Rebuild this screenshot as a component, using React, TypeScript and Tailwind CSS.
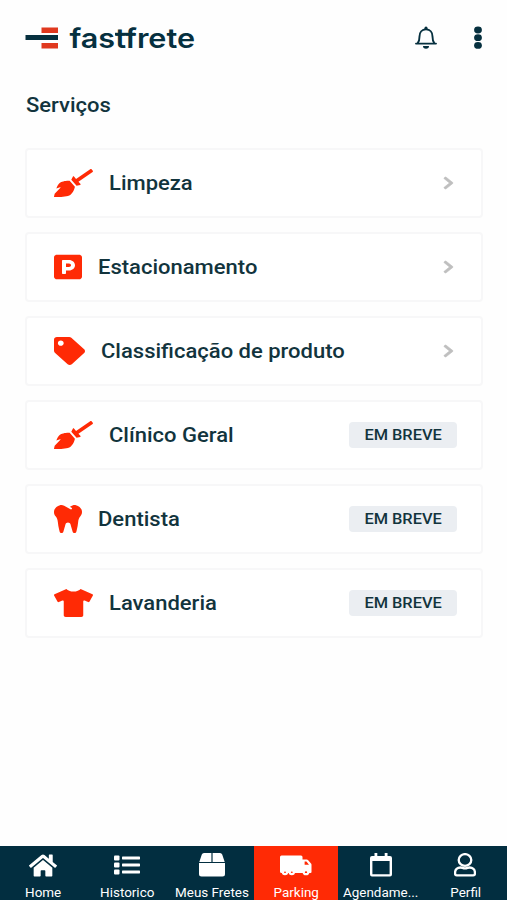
import type { ReactNode } from "react";
import type { IconType } from "react-icons";
import {
  FaBroom,
  FaChevronRight,
  FaHome,
  FaParking,
  FaTag,
  FaTooth,
  FaTshirt,
} from "react-icons/fa";

type Service = {
  label: string;
  icon: IconType;
  iconClass: string;
  soon?: boolean;
};

const services: Service[] = [
  { label: "Limpeza", icon: FaBroom, iconClass: "w-[39px]" },
  { label: "Estacionamento", icon: FaParking, iconClass: "w-7" },
  { label: "Classificação de produto", icon: FaTag, iconClass: "w-[31px]" },
  { label: "Clínico Geral", icon: FaBroom, iconClass: "w-[39px]", soon: true },
  { label: "Dentista", icon: FaTooth, iconClass: "w-7", soon: true },
  { label: "Lavanderia", icon: FaTshirt, iconClass: "w-[39px]", soon: true },
];

const Logo = () => (
  <svg width="180" height="44" viewBox="0 -7 180 44" role="img" aria-label="fastfrete">
    <rect x="16.5" y="4.5" width="16.5" height="5.5" fill="#e0391f" />
    <rect x="0.5" y="12" width="32.5" height="5" fill="#06303f" />
    <rect x="16.5" y="20" width="16.5" height="5.5" fill="#e0391f" />
    <text
      x="44.5"
      y="24.5"
      textLength="125.5"
      lengthAdjust="spacingAndGlyphs"
      fill="#06303f"
      className="font-['Inter',sans-serif] text-[27px] font-semibold"
    >
      fastfrete
    </text>
    {/* shared crossbar of the t and f */}
    <rect x="90" y="9.8" width="20" height="2.7" fill="#06303f" />
  </svg>
);

const BellIcon = () => (
  <svg width="22" height="24" viewBox="0 0 22 24" fill="none" stroke="#06303f" strokeWidth="1.9">
    <path
      d="M1 17.600h20M2.600 17.400c1.700-2 1.900-3.800 1.900-7C4.500 6.200 7 3.400 11 3.400s6.500 2.800 6.500 7c0 3.200.2 5 1.900 7"
      strokeLinejoin="round"
      strokeLinecap="round"
    />
    <circle cx="11" cy="2.200" r="1.600" fill="#06303f" stroke="none" />
    <path d="M8 20h6a3 2.800 0 0 1-6 0z" fill="#06303f" stroke="none" />
  </svg>
);

const DotsIcon = () => (
  <svg width="8" height="24" viewBox="0 0 8 24" fill="#06303f">
    <ellipse cx="4" cy="4" rx="3.900" ry="3.400" />
    <ellipse cx="4" cy="11.700" rx="3.900" ry="3.400" />
    <ellipse cx="4" cy="19.400" rx="3.900" ry="3.400" />
  </svg>
);

const HistoryIcon = () => (
  <svg width="26" height="20" viewBox="0 0 26 20" fill="#fff">
    <rect x="0" y="0.500" width="5.500" height="5" rx="1" />
    <rect x="0" y="7.500" width="5.500" height="5" rx="1" />
    <rect x="0" y="14.500" width="5.500" height="5" rx="1" />
    <rect x="8" y="1.600" width="18" height="2.800" rx="0.600" />
    <rect x="8" y="8.600" width="18" height="2.800" rx="0.600" />
    <rect x="8" y="15.600" width="18" height="2.800" rx="0.600" />
  </svg>
);

const BoxIcon = () => (
  <svg width="26" height="24" viewBox="0 0 26 24" fill="#fff">
    <path d="M12.400 0v9H0.300L2.800 1.600A2.400 2.400 0 0 1 5 0zM13.600 0H21a2.400 2.400 0 0 1 2.200 1.600L25.700 9H13.600z" />
    <path d="M0 10.100h26V21a2.500 2.500 0 0 1-2.500 2.500h-21A2.500 2.500 0 0 1 0 21z" />
  </svg>
);

const TruckIcon = () => (
  <svg width="32" height="21" viewBox="0 0 32 21">
    <path
      d="M1.500 0.500H21A1.500 1.500 0 0 1 22.500 2v2.500h4.200a2 2 0 0 1 1.500.7l2.800 3.200a2 2 0 0 1 .5 1.300V17a1 1 0 0 1-1 1H1.500A1.500 1.500 0 0 1 0 16.500V2A1.500 1.500 0 0 1 1.500.5z"
      fill="#fff"
    />
    <path d="M24.600 6.500h1.800l2.600 3.300h-4.400z" fill="#ff2a05" />
    <g fill="#ff2a05" stroke="#fff" strokeWidth="2.200">
      <ellipse cx="5" cy="17.200" rx="2.100" ry="1.900" />
      <ellipse cx="11.800" cy="17.200" rx="2.100" ry="1.900" />
      <ellipse cx="26" cy="17.200" rx="2.300" ry="2" />
    </g>
  </svg>
);

const CalendarIcon = () => (
  <svg width="22" height="24" viewBox="0 0 22 24">
    <path
      d="M4.500 0h2.800v3h7.400V0h2.800v3H20a2 2 0 0 1 2 2v16.500a2 2 0 0 1-2 2H2a2 2 0 0 1-2-2V5a2 2 0 0 1 2-2h2.500zM2.400 8v13.200h17.200V8z"
      fill="#fff"
      fillRule="evenodd"
    />
  </svg>
);

const UserIcon = () => (
  <svg width="22" height="24" viewBox="0 0 22 24" fill="none" stroke="#fff" strokeWidth="2.300">
    <ellipse cx="11" cy="7" rx="6.300" ry="5.900" />
    <path d="M6.500 14.500c1.700 0 2.300.9 4.500.9s2.800-.9 4.500-.9c3.300 0 5.400 2 5.400 4.800v1.500c0 .9-.7 1.500-1.600 1.500H2.700c-.9 0-1.600-.6-1.600-1.500v-1.500c0-2.800 2.100-4.800 5.400-4.800z" />
  </svg>
);

type Tab = { label: string; icon: ReactNode; active?: boolean };

const tabs: Tab[] = [
  { label: "Home", icon: <FaHome className="h-[25px] w-[28px]" preserveAspectRatio="none" /> },
  { label: "Historico", icon: <HistoryIcon /> },
  { label: "Meus Fretes", icon: <BoxIcon /> },
  { label: "Parking", icon: <TruckIcon />, active: true },
  { label: "Agendame...", icon: <CalendarIcon /> },
  { label: "Perfil", icon: <UserIcon /> },
];

const ServiceCard = ({ service }: { service: Service }) => {
  const Icon = service.icon;

  return (
    <li className="flex h-[70px] items-center rounded-[4px] border-2 border-[#f7f7f8] bg-white pl-[27px] pr-6">
      <Icon
        className={`h-7 shrink-0 text-[#ff2a05] ${service.iconClass}`}
        preserveAspectRatio="none"
      />
      <span className="ml-4 origin-left scale-x-[1.1] whitespace-nowrap text-xl font-medium">
        {service.label}
      </span>
      {service.soon ? (
        <span className="ml-auto flex h-[26px] w-[108px] items-center justify-center rounded-[4px] bg-[#ebeef2]">
          <span className="scale-x-[1.17] whitespace-nowrap text-sm font-medium">EM BREVE</span>
        </span>
      ) : (
        <FaChevronRight
          className="ml-auto mr-[3px] h-[14px] w-[11px] stroke-[#bfbfbf] stroke-[20] text-[#bfbfbf]"
          preserveAspectRatio="none"
        />
      )}
    </li>
  );
};

const App = () => {
  return (
    <div className="flex h-[900px] w-[507px] flex-col overflow-hidden bg-[#fefefe] font-['Roboto',sans-serif] text-[#12343d]">
      <header className="flex h-[76px] items-center px-[25px]">
        <Logo />
        <div className="ml-auto flex items-center gap-[37px]">
          <BellIcon />
          <DotsIcon />
        </div>
      </header>

      <main className="flex-1 pl-[25px] pr-6 pt-[15px]">
        <h1 className="ml-px w-fit origin-left scale-x-[1.1] text-xl font-medium leading-7">Serviços</h1>
        <ul className="mt-[29px] flex flex-col gap-[14px]">
          {services.map((service) => (
            <ServiceCard key={service.label} service={service} />
          ))}
        </ul>
      </main>

      <nav className="grid h-[54px] shrink-0 grid-cols-6 bg-[#022e40] text-white">
        {tabs.map((tab) => (
          <div
            key={tab.label}
            className={`flex flex-col items-center pl-px pt-[6px] ${tab.active ? "bg-[#ff2a05]" : ""}`}
          >
            <div className="flex h-[26px] items-center justify-center">{tab.icon}</div>
            <span className="mt-[7px] scale-x-[1.12] whitespace-nowrap text-[12px] leading-4">{tab.label}</span>
          </div>
        ))}
      </nav>
    </div>
  );
};

export default App;
